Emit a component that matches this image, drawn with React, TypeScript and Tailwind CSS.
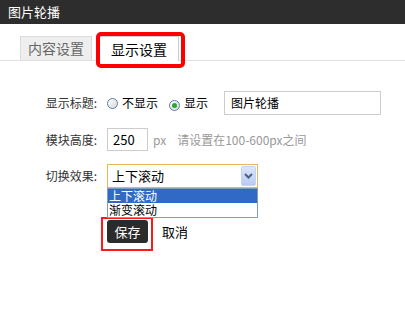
const font = { fontFamily: '"Noto Sans CJK SC", "Liberation Sans", sans-serif' };

function Radio({ checked }: { checked?: boolean }) {
  return (
    <span className="relative inline-flex items-center justify-center w-[11px] h-[11px] rounded-full border border-[#5a7ea6] bg-gradient-to-br from-white to-[#d8d8d8]">
      {checked && <span className="w-[5px] h-[5px] rounded-full bg-[#2fa52f]" />}
    </span>
  );
}

export default function App() {
  return (
    <div className="w-[405px] h-[321px] bg-white text-[12px] text-[#333] overflow-hidden" style={font}>
      <div className="h-6 bg-[#2d2d2d] text-white flex items-center px-2 text-[13px]">图片轮播</div>

      <div className="flex items-end gap-[7px] pl-5 border-b border-[#e0e0e0] h-[36px] box-content">
        <div className="w-[72px] h-6 flex items-center justify-center bg-[#eeeeee] border border-b-0 border-[#dcdcdc] text-[#666] text-[14px]">
          内容设置
        </div>
        <div className="relative w-[80px] h-[25px] -mb-px flex items-center justify-center bg-white border border-b-0 border-[#cccccc] text-black text-[14px]">
          显示设置
          <span className="absolute -left-[4px] -right-[7px] -top-[5px] -bottom-[7px] border-4 border-[#ff0000] rounded-[5px]" />
        </div>
      </div>

      <div className="pt-[30px] flex flex-col gap-[13px]">
        <div className="flex items-center h-6">
          <div className="w-[97px] text-right">显示标题:</div>
          <div className="flex items-center ml-[10px]">
            <Radio />
            <span className="ml-[4px] text-black">不显示</span>
            <span className="ml-[11px]"><Radio checked /></span>
            <span className="ml-[4px] text-black">显示</span>
            <div className="ml-[16px] w-[157px] h-6 border border-[#cccccc] flex items-center px-[6px] text-black">图片轮播</div>
          </div>
        </div>

        <div className="flex items-center h-[23px]">
          <div className="w-[97px] text-right">模块高度:</div>
          <div className="flex items-center ml-[10px]">
            <div className="w-[41px] h-[23px] border border-[#cccccc] flex items-center px-[5px] text-black text-[13px]">250</div>
            <span className="ml-[5px] text-[#999]">px</span>
            <span className="ml-[11px] text-[#999]">请设置在100-600px之间</span>
          </div>
        </div>

        <div className="flex items-center h-6">
          <div className="w-[97px] text-right">切换效果:</div>
          <div className="relative ml-[10px]">
            <div className="w-[151px] h-6 border border-[#e8b65a] flex items-center pl-[4px] pr-[1px] text-black text-[13px]">
              <span className="flex-1">上下滚动</span>
              <span className="w-[15px] h-[20px] flex items-center justify-center rounded-[2px] bg-gradient-to-b from-[#dce6fb] to-[#b8cbf2] border border-[#c3d3f5]">
                <svg width="9" height="6" viewBox="0 0 9 6">
                  <path d="M1 1 L4.5 4.5 L8 1" stroke="#4d6185" strokeWidth="2" fill="none" />
                </svg>
              </span>
            </div>
            <div className="absolute left-0 top-[24px] w-[151px] border border-[#7f9db9] bg-white text-[12px] z-10">
              <div className="h-[14px] leading-[14px] bg-[#316ac5] text-white pl-[1px]">上下滚动</div>
              <div className="h-[14px] leading-[14px] text-black pl-[1px]">渐变滚动</div>
            </div>
          </div>
        </div>
      </div>

      <div className="flex items-center mt-[32px] pl-[107px]">
        <div className="relative">
          <div className="w-[41px] h-[23px] rounded-[3px] bg-[#2b2b2b] text-white text-[13px] flex items-center justify-center">保存</div>
          <span className="absolute -left-[6px] -right-[5px] -top-[3px] -bottom-[8px] border-2 border-[#ff1a1a]" />
        </div>
        <span className="ml-[14px] text-black text-[13px]">取消</span>
      </div>
    </div>
  );
}
